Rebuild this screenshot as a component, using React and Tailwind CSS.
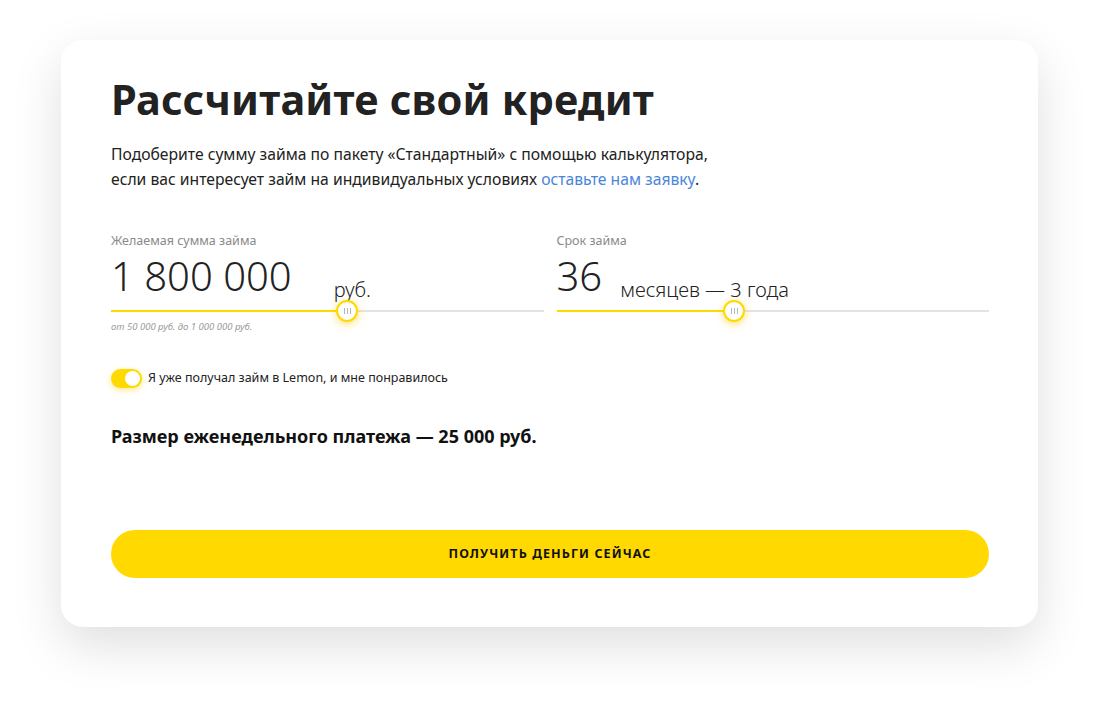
import React from "react";

function Thumb() {
  return (
    <div className="absolute top-1/2 -translate-x-1/2 -translate-y-1/2 w-[22px] h-[22px] rounded-full bg-white border-2 border-[#ffd900] shadow-[0_2px_8px_rgba(255,200,0,0.55)] flex items-center justify-center gap-[2px]">
      <span className="w-px h-[6px] bg-[#b5b5b5]" />
      <span className="w-px h-[6px] bg-[#b5b5b5]" />
      <span className="w-px h-[6px] bg-[#b5b5b5]" />
    </div>
  );
}

function Slider({ pct }) {
  return (
    <div className="relative h-[2px] bg-[#e3e3e3]">
      <div className="h-full bg-[#ffd900]" style={{ width: pct + "%" }} />
      <div className="absolute inset-0" style={{ left: pct + "%" }}>
        <Thumb />
      </div>
    </div>
  );
}

export default function App() {
  return (
    <div
      className="w-[1100px] h-[714px] bg-white pt-[40px] pl-[61px]"
      style={{ fontFamily: '"Noto Sans", "Open Sans", sans-serif' }}
    >
      <div className="w-[977px] h-[587px] bg-white rounded-[22px] shadow-[0_18px_50px_rgba(0,0,0,0.13)] pl-[50px] pr-[49px] pt-[31px] text-[#1f1f1f]">
        <h1 className="text-[41.5px] leading-[56px] font-bold tracking-[0.2px] text-[#222]">
          Рассчитайте свой кредит
        </h1>
        <p className="mt-[15px] text-[15.7px] leading-[25px] text-[#222]">
          Подоберите сумму займа по пакету «Стандартный» с помощью калькулятора,
          <br />
          если вас интересует займ на индивидуальных условиях{" "}
          <a className="text-[#4a86d8]">оставьте нам заявку</a>.
        </p>

        <div className="mt-[40px] grid grid-cols-2 gap-[13px]">
          <div>
            <div className="text-[12.5px] leading-[18px] text-[#8a8a8a]">Желаемая сумма займа</div>
            <div className="flex items-end h-[46px] mt-[2px]">
              <span className="text-[40px] leading-[44px] font-light text-[#222]">1 800 000</span>
              <span className="ml-[42px] text-[20px] leading-[22px] font-light text-[#222] mb-[-3px]">руб.</span>
            </div>
            <div className="mt-[12px]">
              <Slider pct={54.6} />
            </div>
            <div className="mt-[8px] text-[9.5px] italic text-[#9a9a9a]">
              от 50 000 руб. до 1 000 000 руб.
            </div>
          </div>
          <div>
            <div className="text-[12.5px] leading-[18px] text-[#8a8a8a]">Срок займа</div>
            <div className="flex items-end h-[46px] mt-[2px]">
              <span className="text-[40px] leading-[44px] font-light text-[#222]">36</span>
              <span className="ml-[18px] text-[20px] leading-[22px] font-light text-[#222] mb-[-3px]">месяцев — 3 года</span>
            </div>
            <div className="mt-[12px]">
              <Slider pct={41.1} />
            </div>
          </div>
        </div>

        <div className="mt-[35px] flex items-center gap-[6px]">
          <div className="w-[31px] h-[19px] rounded-full bg-[#ffd900] relative shadow-[0_2px_6px_rgba(255,200,0,0.45)]">
            <div className="absolute right-[2px] top-[2px] w-[15px] h-[15px] rounded-full bg-white" />
          </div>
          <span className="text-[12.5px] text-[#222]">Я уже получал займ в Lemon, и мне понравилось</span>
        </div>

        <div className="mt-[35px] text-[18px] font-bold text-[#111]">
          Размер еженедельного платежа — 25 000 руб.
        </div>

        <button className="mt-[80px] w-full h-[48px] rounded-full bg-[#ffd900] text-[12.5px] font-bold tracking-[1.1px] text-[#111]">
          ПОЛУЧИТЬ ДЕНЬГИ СЕЙЧАС
        </button>
      </div>
    </div>
  );
}
